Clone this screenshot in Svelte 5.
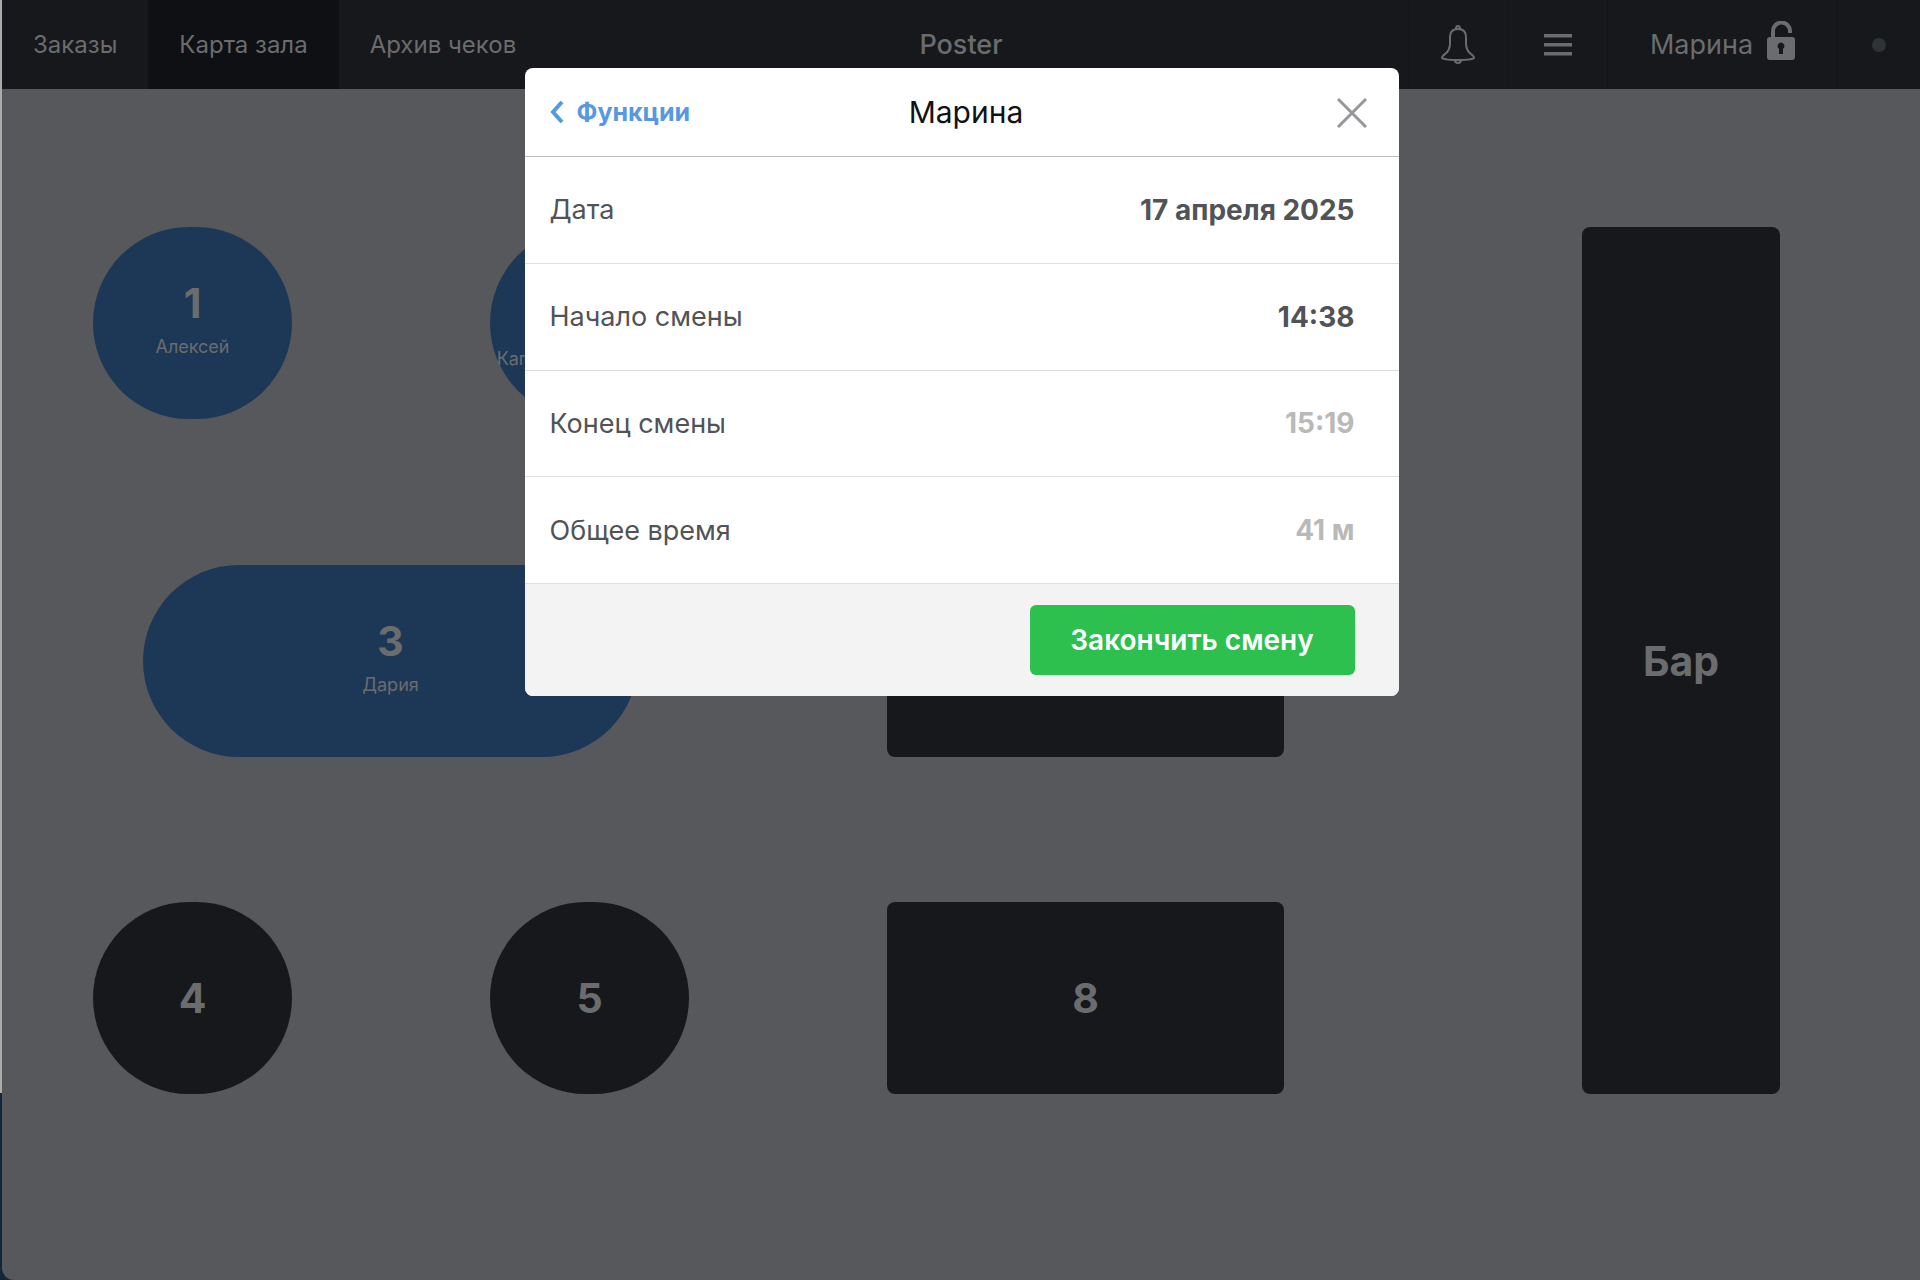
<script lang="ts">
	interface Table {
		name: string;
		waiter?: string;
		shape: 'round' | 'square';
		busy?: boolean;
		x: number;
		y: number;
		w: number;
		h: number;
	}

	const tabs = [
		{ title: 'Заказы', active: false },
		{ title: 'Карта зала', active: true },
		{ title: 'Архив чеков', active: false }
	];

	// position and size on the hall plan, in plan units
	const tables: Table[] = [
		{ name: '1', waiter: 'Алексей', shape: 'round', busy: true, x: 91, y: 138, w: 199, h: 192 },
		{ name: '', waiter: 'Александра Капитонова\u00a0Северин', shape: 'round', busy: true, x: 488, y: 138, w: 199, h: 192 },
		{ name: '3', waiter: 'Дария', shape: 'round', busy: true, x: 141, y: 476, w: 495, h: 192 },
		{ name: '4', shape: 'round', x: 91, y: 813, w: 199, h: 192 },
		{ name: '5', shape: 'round', x: 488, y: 813, w: 199, h: 192 },
		{ name: '', shape: 'square', x: 885, y: 476, w: 397, h: 192 },
		{ name: '8', shape: 'square', x: 885, y: 813, w: 397, h: 192 },
		{ name: 'Бар', shape: 'square', x: 1580, y: 138, w: 198, h: 867 }
	];

	const rows = [
		{ label: 'Дата', value: '17 апреля 2025', muted: false },
		{ label: 'Начало смены', value: '14:38', muted: false },
		{ label: 'Конец смены', value: '15:19', muted: true },
		{ label: 'Общее время', value: '41 м', muted: true }
	];
</script>

<div class="screen">
	<div class="app">
		<header class="topbar">
			<nav class="tabs">
				{#each tabs as tab}
					<a href="#top" class="tab" class:active={tab.active}>{tab.title}</a>
				{/each}
			</nav>
			<div class="brand">Poster</div>
			<div class="tools">
				<button class="tool" aria-label="Уведомления">
					<svg width="36" height="40" viewBox="0 0 36 40" fill="none" stroke="currentColor" stroke-width="2">
						<path d="M17 4c-6 0-8 3-8 8v6c0 6-2 9-5 11-2 2-3 2-3 4 0 1 7 2 16 2s16-1 16-2c0-2-1-2-3-4-3-2-5-5-5-11v-6c0-5-2-8-8-8z" />
						<path d="M15 4c0-4 4-4 4 0M14 35c0 4 6 4 6 0" />
					</svg>
				</button>
				<button class="tool" aria-label="Меню">
					<svg width="28" height="22" viewBox="0 0 28 22" fill="currentColor">
						<path d="M0 0h28v3.500H0zM0 9h28v3.500H0zM0 18h28v3.500H0z" />
					</svg>
				</button>
				<button class="tool user">
					Марина
					<svg width="28" height="40" viewBox="0 0 28 40">
						<path d="M6 18V10a8.500 8.500 0 0 1 17 0v2" fill="none" stroke="currentColor" stroke-width="4" />
						<path fill="currentColor" fill-rule="evenodd" d="M3 16h22q3 0 3 3v17q0 3-3 3H3q-3 0-3-3V19q0-3 3-3zM14 21.500a3.500 3.500 0 0 0-2 6.300V33h4v-5.200a3.500 3.500 0 0 0-2-6.300z" />
					</svg>
				</button>
				<div class="tool status"><span class="dot"></span></div>
			</div>
		</header>

		<main class="hall">
			{#each tables as table}
				<button
					class="table {table.shape}"
					class:busy={table.busy}
					style="left: {table.x}px; top: {table.y}px; width: {table.w}px; height: {table.h}px"
				>
					<span class="table-name">{table.name}</span>
					{#if table.waiter}
						<span class="waiter">{table.waiter}</span>
					{/if}
				</button>
			{/each}
		</main>
	</div>

	<div class="overlay">
		<div class="modal" role="dialog" aria-labelledby="modal-title">
			<div class="modal-header">
				<button class="back">
					<svg width="14" height="22" viewBox="0 0 14 22" fill="none" stroke="currentColor" stroke-width="4">
						<path d="M12 1L3 11l9 10" />
					</svg>
					Функции
				</button>
				<h1 id="modal-title">Марина</h1>
				<button class="close" aria-label="Закрыть">
					<svg width="30" height="32" viewBox="0 0 30 32" fill="none" stroke="currentColor" stroke-width="3">
						<path d="M1 3l28 28M29 3L1 31" />
					</svg>
				</button>
			</div>
			<dl>
				{#each rows as row}
					<div class="row">
						<dt>{row.label}</dt>
						<dd class:muted={row.muted}>{row.value}</dd>
					</div>
				{/each}
			</dl>
			<div class="modal-footer">
				<button class="finish">Закончить смену</button>
			</div>
		</div>
	</div>
</div>

<style>
	:global(body) {
		margin: 0;
	}

	.screen {
		position: relative;
		box-sizing: border-box;
		min-height: 100vh;
		padding-left: 2px;
		background: linear-gradient(#abadab 1093px, #14263a 1093px);
		font-family: Inter, 'Liberation Sans', sans-serif;
		overflow: hidden;
	}

	button {
		border: none;
		padding: 0;
		background: none;
		font: inherit;
		color: inherit;
	}

	.app {
		display: flex;
		flex-direction: column;
		min-height: 100vh;
		background: #57585b;
		border-bottom-left-radius: 12px;
		overflow: hidden;
	}

	.topbar {
		display: grid;
		grid-template-columns: 1fr auto 1fr;
		height: 89px;
		background: #17181c;
		color: #6b6c6e;
	}

	.tabs {
		display: flex;
	}

	.tab {
		display: flex;
		align-items: center;
		padding: 0 31px;
		font-size: 24px;
		color: inherit;
		text-decoration: none;
	}

	.tab.active {
		background: #0f1013;
	}

	.brand {
		display: flex;
		align-items: center;
		font-size: 27px;
		font-weight: 500;
	}

	.tools {
		display: flex;
		justify-content: flex-end;
	}

	.tool {
		display: flex;
		align-items: center;
		justify-content: center;
		box-sizing: border-box;
		width: 99px;
		border-left: 1px solid #131418;
	}

	.tool.user {
		gap: 14px;
		width: 230px;
		font-size: 27px;
	}

	.user svg {
		margin-bottom: 8px;
	}

	.tool.status {
		width: 83px;
	}

	.dot {
		width: 14px;
		height: 14px;
		border-radius: 50%;
		background: #303335;
	}

	.hall {
		position: relative;
		flex: 1;
	}

	.table {
		position: absolute;
		display: flex;
		flex-direction: column;
		align-items: center;
		justify-content: center;
		background: #17181c;
		color: #6b6c6e;
	}

	.table.round {
		border-radius: 96px;
	}

	.table.square {
		border-radius: 8px;
	}

	.table.busy {
		background: #1d3857;
	}

	.table-name {
		min-height: 48px;
		font-size: 41px;
		font-weight: 700;
		line-height: 48px;
	}

	.waiter {
		padding: 8px 0;
		font-size: 18px;
		line-height: 24px;
	}

	.overlay {
		position: absolute;
		inset: 0;
		display: flex;
		align-items: flex-start;
		justify-content: center;
		padding-top: 68px;
	}

	.modal {
		width: 874px;
		margin-left: 3px;
		background: white;
		border-radius: 8px;
		overflow: hidden;
	}

	.modal-header {
		display: grid;
		grid-template-columns: 180px 1fr 164px;
		align-items: center;
		height: 88px;
		padding: 0 32px 0 25px;
		border-bottom: 1px solid #bdbdbd;
	}

	.back {
		display: flex;
		align-items: center;
		gap: 13px;
		font-size: 25px;
		font-weight: 700;
		color: #5798e1;
	}

	h1 {
		margin: 0;
		font-size: 30px;
		font-weight: 400;
		text-align: center;
		color: #111214;
	}

	.close {
		display: flex;
		justify-self: end;
		color: #949699;
	}

	dl {
		display: grid;
		grid-template-rows: repeat(4, 1fr);
		height: 427px;
		margin: 0;
	}

	.row {
		display: flex;
		align-items: center;
		justify-content: space-between;
		padding: 0 44px 0 25px;
		border-bottom: 1px solid #dedede;
		font-size: 27px;
		color: #525356;
	}

	dd {
		margin: 0;
		font-weight: 700;
	}

	dd {
		font-size: 28px;
	}

	dd.muted {
		color: #b9b9b9;
	}

	.modal-footer {
		display: flex;
		justify-content: flex-end;
		padding: 21px 44px;
		background: #f3f3f3;
	}

	.finish {
		width: 325px;
		height: 70px;
		border-radius: 6px;
		background: #2dc04e;
		font-size: 28px;
		font-weight: 600;
		color: white;
	}
</style>
